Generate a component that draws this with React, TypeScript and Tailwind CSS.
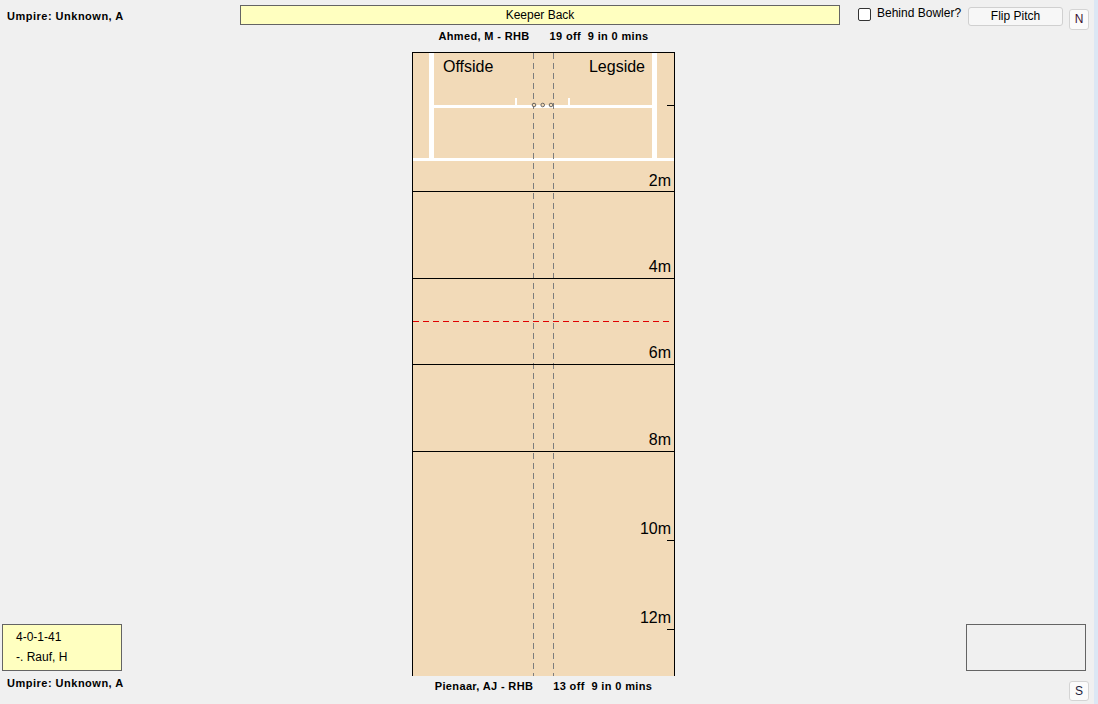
import React from 'react';

const PITCH_W = 263;
const PITCH_H = 624;

// distance markers on the pitch, y values local to the svg
const distanceLines = [139.5, 226.5, 312.5, 399.5];
const distanceLabels = [
  { text: '2m', y: 134 },
  { text: '4m', y: 220 },
  { text: '6m', y: 306 },
  { text: '8m', y: 393 },
  { text: '10m', y: 482 },
  { text: '12m', y: 571 },
];
const sideTicks = [53.5, 488.5, 577.5];

const Pitch: React.FC = () => (
  <svg width={PITCH_W} height={PITCH_H} viewBox={`0 0 ${PITCH_W} ${PITCH_H}`} className="block shrink-0">
    <rect x={0} y={0} width={PITCH_W} height={PITCH_H} fill="#f2dab8" />

    {/* creases */}
    <rect x={17} y={0} width={5} height={107} fill="#ffffff" />
    <rect x={240} y={0} width={5} height={107} fill="#ffffff" />
    <rect x={22} y={53} width={218} height={3} fill="#ffffff" />
    <rect x={1} y={106} width={261} height={3} fill="#ffffff" />
    <rect x={103} y={46} width={2} height={7} fill="#ffffff" />
    <rect x={156} y={46} width={2} height={7} fill="#ffffff" />

    {/* stump line */}
    <line x1={121.5} y1={1} x2={121.5} y2={PITCH_H} stroke="#7d7d7d" strokeWidth={1} strokeDasharray="6 4" />
    <line x1={141.5} y1={1} x2={141.5} y2={PITCH_H} stroke="#7d7d7d" strokeWidth={1} strokeDasharray="6 4" />
    {[122, 130.7, 139].map((cx) => (
      <circle key={cx} cx={cx} cy={53} r={1.8} fill="#f2dab8" stroke="#4a4a4a" strokeWidth={0.8} />
    ))}

    {/* distance lines */}
    {distanceLines.map((y) => (
      <line key={y} x1={1} y1={y} x2={262} y2={y} stroke="#000000" strokeWidth={1} />
    ))}
    {sideTicks.map((y) => (
      <line key={y} x1={255} y1={y} x2={262} y2={y} stroke="#000000" strokeWidth={1} />
    ))}

    {/* red good-length line */}
    <line x1={1} y1={269.5} x2={258} y2={269.5} stroke="#e00000" strokeWidth={1} strokeDasharray="6 4" />

    <text x={31} y={20} fontFamily="'Liberation Sans', Arial, sans-serif" fontSize={16} fill="#000">
      Offside
    </text>
    <text x={233} y={20} textAnchor="end" fontFamily="'Liberation Sans', Arial, sans-serif" fontSize={16} fill="#000">
      Legside
    </text>
    {distanceLabels.map((l) => (
      <text
        key={l.text}
        x={259}
        y={l.y}
        textAnchor="end"
        fontFamily="'Liberation Sans', Arial, sans-serif"
        fontSize={16}
        fill="#000"
      >
        {l.text}
      </text>
    ))}

    {/* border: left, top, right */}
    <line x1={0.5} y1={0} x2={0.5} y2={PITCH_H} stroke="#000" strokeWidth={1} />
    <line x1={0} y1={0.5} x2={PITCH_W} y2={0.5} stroke="#000" strokeWidth={1} />
    <line x1={262.5} y1={0} x2={262.5} y2={PITCH_H} stroke="#000" strokeWidth={1} />
  </svg>
);

const BatterLine: React.FC<{ name: string; stats: string }> = ({ name, stats }) => (
  <div className="text-[11px] leading-[13px] font-bold tracking-[0.35px] text-black whitespace-pre">
    <span>{name}</span>
    <span className="ml-[20px]">{stats}</span>
  </div>
);

const SmallButton: React.FC<{ label: string }> = ({ label }) => (
  <button className="w-[20px] h-[21px] rounded-[3px] border border-[#d4d4d4] bg-[#fbfbfb] text-[12px] leading-[19px] text-[#3a1030] text-center p-0">
    {label}
  </button>
);

export default function App() {
  return (
    <div className="w-[1098px] h-[704px] flex bg-[#f0f0f0] overflow-hidden font-['Liberation_Sans',Arial,sans-serif] text-black">
      <div className="w-[1094px] h-[704px] flex flex-col">
        {/* top row */}
        <div className="h-[28px] flex items-start shrink-0">
          <div className="w-[240px] pl-[7px] pt-[10px] text-[11px] leading-[13px] font-bold tracking-[0.5px] whitespace-nowrap">
            Umpire: Unknown, A
          </div>
          <div className="mt-[5px] w-[600px] h-[20px] border border-[#646464] bg-[#ffffc0] text-[12px] leading-[18px] text-center">
            Keeper Back
          </div>
          <div className="w-[128px] pl-[18px] flex items-start">
            <div className="mt-[8px] w-[13px] h-[13px] rounded-[2px] border border-[#333333] bg-white shrink-0" />
            <span className="ml-[6px] mt-[6px] text-[12px] leading-[14px] whitespace-nowrap">Behind Bowler?</span>
          </div>
          <button className="mt-[7px] w-[95px] h-[19px] rounded-[3px] border border-[#d0d0d0] bg-[#f7f7f7] text-[12px] leading-[17px] text-center p-0">
            Flip Pitch
          </button>
          <div className="ml-[6px] mt-[6px]">
            <SmallButton label="N" />
          </div>
        </div>

        {/* striker name row */}
        <div className="h-[24px] flex shrink-0">
          <div className="w-[412px]" />
          <div className="w-[263px] pt-[2px] flex justify-center">
            <BatterLine name="Ahmed, M - RHB" stats="19 off  9 in 0 mins" />
          </div>
        </div>

        {/* pitch area */}
        <div className="h-[624px] flex shrink-0">
          <div className="w-[412px] flex flex-col justify-end pb-[5px] pl-[2px]">
            <div className="w-[120px] h-[47px] border border-[#646464] bg-[#ffffc0] pl-[13px] pt-[2px] text-[12px] leading-[20px]">
              <div>4-0-1-41</div>
              <div>-. Rauf, H</div>
            </div>
          </div>
          <Pitch />
          <div className="flex-1 flex justify-end items-end pb-[5px] pr-[8px]">
            <div className="w-[120px] h-[47px] border border-[#646464]" />
          </div>
        </div>

        {/* bottom row */}
        <div className="h-[28px] flex shrink-0">
          <div className="w-[412px] pl-[7px] pt-[1px] text-[11px] leading-[13px] font-bold tracking-[0.5px] whitespace-nowrap">
            Umpire: Unknown, A
          </div>
          <div className="w-[263px] pt-[4px] flex justify-center">
            <BatterLine name="Pienaar, AJ - RHB" stats="13 off  9 in 0 mins" />
          </div>
          <div className="flex-1 flex justify-end pr-[5px] pt-[5px]">
            <button className="w-[20px] h-[20px] rounded-[3px] border border-[#d4d4d4] bg-[#fbfbfb] text-[12px] leading-[18px] text-[#1c1c3c] text-center p-0">
              S
            </button>
          </div>
        </div>
      </div>
      <div className="w-[4px] h-[704px] bg-[#dce7f4]" />
    </div>
  );
}
